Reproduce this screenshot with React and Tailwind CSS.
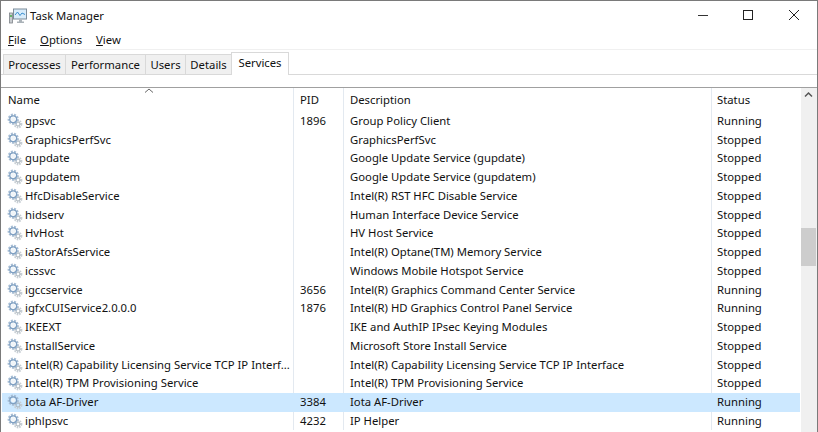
import React from "react";

const rows = [
  ["gpsvc", "1896", "Group Policy Client", "Running"],
  ["GraphicsPerfSvc", "", "GraphicsPerfSvc", "Stopped"],
  ["gupdate", "", "Google Update Service (gupdate)", "Stopped"],
  ["gupdatem", "", "Google Update Service (gupdatem)", "Stopped"],
  ["HfcDisableService", "", "Intel(R) RST HFC Disable Service", "Stopped"],
  ["hidserv", "", "Human Interface Device Service", "Stopped"],
  ["HvHost", "", "HV Host Service", "Stopped"],
  ["iaStorAfsService", "", "Intel(R) Optane(TM) Memory Service", "Stopped"],
  ["icssvc", "", "Windows Mobile Hotspot Service", "Stopped"],
  ["igccservice", "3656", "Intel(R) Graphics Command Center Service", "Running"],
  ["igfxCUIService2.0.0.0", "1876", "Intel(R) HD Graphics Control Panel Service", "Running"],
  ["IKEEXT", "", "IKE and AuthIP IPsec Keying Modules", "Stopped"],
  ["InstallService", "", "Microsoft Store Install Service", "Stopped"],
  ["Intel(R) Capability Licensing Service TCP IP Interf...", "", "Intel(R) Capability Licensing Service TCP IP Interface", "Stopped"],
  ["Intel(R) TPM Provisioning Service", "", "Intel(R) TPM Provisioning Service", "Stopped"],
  ["Iota AF-Driver", "3384", "Iota AF-Driver", "Running", true],
  ["iphlpsvc", "4232", "IP Helper", "Running"],
];

function Gear() {
  return (
    <svg width="16" height="16" viewBox="0 0 16 16" className="shrink-0">
      <circle cx="11" cy="11" r="3.3" fill="none" stroke="#c6cdd3" strokeWidth="2.2" strokeDasharray="1.5 0.9" />
      <circle cx="11" cy="11" r="2" fill="none" stroke="#a8b2ba" strokeWidth="1" />
      <circle cx="6.2" cy="6.2" r="4.4" fill="none" stroke="#a8bed5" strokeWidth="2.4" strokeDasharray="1.9 1.1" />
      <circle cx="6.2" cy="6.2" r="3.4" fill="none" stroke="#7fa0c2" strokeWidth="1.3" />
      <circle cx="6.2" cy="6.2" r="2.1" fill="#f0f5f9" />
    </svg>
  );
}

function AppIcon() {
  return (
    <svg width="18" height="16" viewBox="0 0 18 16">
      <rect x="0.5" y="5" width="3" height="10" fill="#c8ccd0" stroke="#7d8388" strokeWidth="0.8" />
      <rect x="1.2" y="7" width="1.6" height="2" fill="#4caf50" />
      <rect x="4.5" y="1" width="13" height="10" fill="#d8ecfa" stroke="#7d8c99" />
      <path d="M6 7 L8.5 4 L11 7.5 L13 5 L16 6.5" fill="none" stroke="#3a8fd0" strokeWidth="1" />
      <path d="M10 11.5 h3 v2 h2 v1.5 h-7 v-1.5 h2z" fill="#aab2b8" />
    </svg>
  );
}

const tabs = [
  ["Processes", "w-[63px]"],
  ["Performance", "w-[81px]"],
  ["Users", "w-[41px]"],
  ["Details", "w-[47px]"],
];

export default function App() {
  return (
    <div className="w-[818px] h-[432px] overflow-hidden bg-white text-[11.3px] leading-[16px] text-[#111] border-t border-x border-[#7a7a7a] flex flex-col font-['Noto_Sans','Open_Sans',sans-serif]">
      <div className="h-[29px] shrink-0 flex items-center">
        <div className="ml-[8px] mr-[3px] flex items-center"><AppIcon /></div>
        <span>Task Manager</span>
        <div className="ml-auto flex items-center h-full">
          <svg width="46" height="29" viewBox="0 0 46 29"><rect x="19" y="14" width="10" height="1" fill="#333" /></svg>
          <svg width="46" height="29" viewBox="0 0 46 29"><rect x="18.5" y="9.5" width="9" height="9" fill="none" stroke="#222" /></svg>
          <svg width="46" height="29" viewBox="0 0 46 29"><path d="M18 9 L28 19 M28 9 L18 19" stroke="#222" strokeWidth="1" /></svg>
        </div>
      </div>
      <div className="h-[19px] shrink-0 flex items-center gap-[14px] pl-[7px] pt-[1px]">
        <span><u>F</u>ile</span>
        <span><u>O</u>ptions</span>
        <span><u>V</u>iew</span>
      </div>
      <div className="h-[25px] shrink-0 flex items-end pl-[2px] border-t border-[#f0f0f0] relative">
        {tabs.map(([t, w]) => (
          <div key={t} className={`${w} h-[20px] bg-[#f0f0f0] border border-b-0 border-[#d9d9d9] -mr-px flex items-center justify-center`}>{t}</div>
        ))}
        <div className="w-[58px] h-[23px] bg-white border border-b-0 border-[#d9d9d9] flex items-center justify-center pb-[3px] -mb-px relative z-10">Services</div>
      </div>
      <div className="h-[13px] shrink-0 border-t border-[#d9d9d9]" />
      <div className="flex-1 min-h-0 flex flex-col border-t border-[#a0a0a0] relative">
        <svg width="10" height="5" viewBox="0 0 10 5" className="absolute left-[143px] top-0"><path d="M1 4.5 L5 1 L9 4.5" fill="none" stroke="#666" /></svg>
        <div className="flex flex-1 min-h-0">
          <div className="flex-1 min-w-0 pl-[1px]">
            <div className="h-[23.6px] flex items-center">
              <div className="w-[292px] pl-[6px] border-r border-[#e3e9f0] h-full flex items-center">Name</div>
              <div className="w-[50px] pl-[6px] border-r border-[#e3e9f0] h-full flex items-center">PID</div>
              <div className="w-[368px] pl-[6px] border-r border-[#e3e9f0] h-full flex items-center">Description</div>
              <div className="flex-1 pl-[5px] h-full flex items-center">Status</div>
            </div>
            {rows.map(([n, p, d, s, sel]) => {
              const line = sel ? "border-[#cce8ff]" : "border-[#e3e9f0]";
              return (
                <div key={n} className={`h-[18.75px] flex items-center ${sel ? "bg-[#cce8ff]" : ""}`}>
                  <div className={`w-[292px] h-full pl-[5px] border-r ${line} flex items-center gap-[2px] min-w-0`}><Gear /><span className="whitespace-nowrap">{n}</span></div>
                  <div className={`w-[50px] h-full pl-[6px] border-r ${line} flex items-center`}>{p}</div>
                  <div className={`w-[368px] h-full pl-[6px] border-r ${line} flex items-center whitespace-nowrap`}>{d}</div>
                  <div className="flex-1 pl-[5px]">{s}</div>
                </div>
              );
            })}
          </div>
          <div className="w-[16px] shrink-0 bg-[#f0f0f0] ml-[1px] flex flex-col">
            <svg width="15" height="15" viewBox="0 0 15 15" className="shrink-0"><path d="M4 8.5 L7.5 5 L11 8.5" fill="none" stroke="#555" strokeWidth="1.5" /></svg>
            <div className="mt-[125px] h-[38px] w-[15px] bg-[#cdcdcd] shrink-0" />
          </div>
        </div>
      </div>
    </div>
  );
}
